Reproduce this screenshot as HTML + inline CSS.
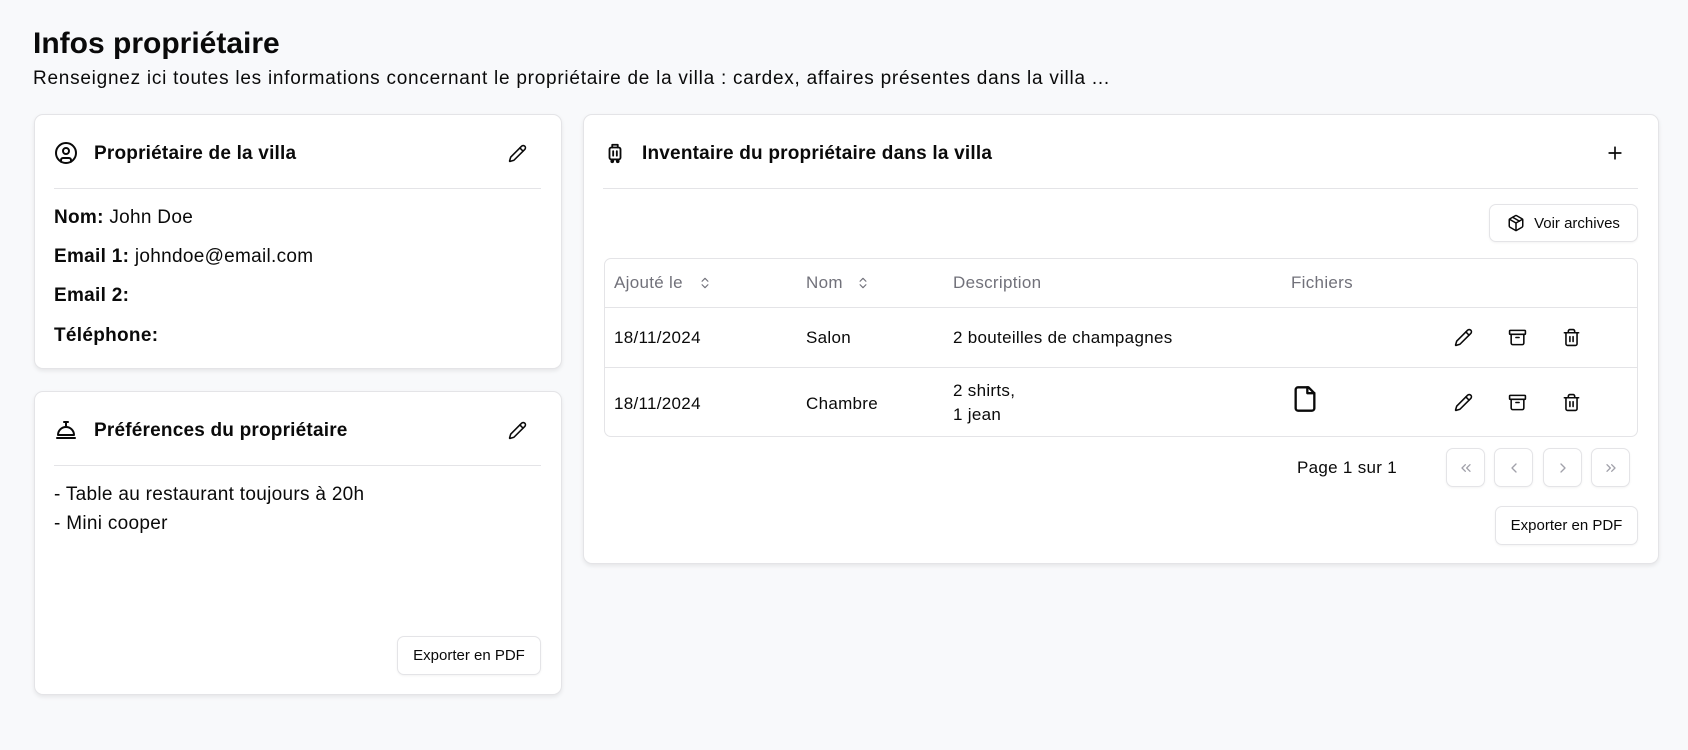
<!DOCTYPE html>
<html><head><meta charset="utf-8"><style>
*{box-sizing:border-box;margin:0;padding:0}
body{width:1688px;height:750px;background:#f8f9fb;font-family:"Liberation Sans",sans-serif;color:#0a0a0a;position:relative;overflow:hidden}
.a{position:absolute}
.card{position:absolute;background:#fff;border:1px solid #e4e4e7;border-radius:9px;box-shadow:0 2px 4px rgba(0,0,0,.08)}
.h{font-size:19px;font-weight:bold;white-space:nowrap;letter-spacing:0.2px}
.div{position:absolute;height:1px;background:#e4e4e7}
.btn{position:absolute;background:#fff;border:1px solid #e4e4e7;border-radius:7px;box-shadow:0 1px 2px rgba(0,0,0,.05);font-size:15px;display:flex;align-items:center;justify-content:center;gap:9px}
.t{font-size:17px;white-space:nowrap;letter-spacing:0.3px}
.th{font-size:17px;color:#71717a;white-space:nowrap;letter-spacing:0.3px}
svg{fill:none;stroke:#0a0a0a;stroke-width:2;stroke-linecap:round;stroke-linejoin:round}
.pg svg{stroke:#a1a1aa}
</style></head><body>
<div class="a" style="left:33px;top:27px;font-size:30px;font-weight:bold">Infos propriétaire</div>
<div class="a" style="left:33px;top:68px;font-size:19px;letter-spacing:0.75px;white-space:nowrap">Renseignez ici toutes les informations concernant le propriétaire de la villa : cardex, affaires présentes dans la villa ...</div>

<div class="card" style="left:34px;top:114px;width:528px;height:255px"></div>
<svg class="a" style="left:54px;top:141px" width="24" height="24" viewBox="0 0 24 24"><circle cx="12" cy="12" r="10"/><circle cx="12" cy="10" r="3"/><path d="M7 20.7v-1.7a2 2 0 0 1 2-2h6a2 2 0 0 1 2 2v1.7"/></svg>
<div class="a h" style="left:94px;top:143px">Propriétaire de la villa</div>
<svg class="a" style="left:508px;top:144px" width="19" height="19" viewBox="0 0 24 24"><path d="M21.2 6.8a2.8 2.8 0 0 0-4-4L3.8 16.2a2 2 0 0 0-.5.8l-1.3 4.4a.5.5 0 0 0 .6.6l4.4-1.3a2 2 0 0 0 .8-.5z"/><path d="m15 5 4 4"/></svg>
<div class="div" style="left:54px;top:188px;width:487px"></div>
<div class="a t" style="left:54px;top:207px;font-size:19px"><b>Nom:</b> John Doe</div>
<div class="a t" style="left:54px;top:246px;font-size:19px"><b>Email 1:</b> johndoe@email.com</div>
<div class="a t" style="left:54px;top:285px;font-size:19px"><b>Email 2:</b></div>
<div class="a t" style="left:54px;top:325px;font-size:19px"><b>Téléphone:</b></div>

<div class="card" style="left:34px;top:391px;width:528px;height:304px"></div>
<svg class="a" style="left:54px;top:418px" width="24" height="24" viewBox="0 0 24 24"><path d="M3 20h18"/><path d="M20 17a8 8 0 0 0-16 0z"/><path d="M12 4v5"/><path d="M10 4h4"/></svg>
<div class="a h" style="left:94px;top:420px">Préférences du propriétaire</div>
<svg class="a" style="left:508px;top:421px" width="19" height="19" viewBox="0 0 24 24"><path d="M21.2 6.8a2.8 2.8 0 0 0-4-4L3.8 16.2a2 2 0 0 0-.5.8l-1.3 4.4a.5.5 0 0 0 .6.6l4.4-1.3a2 2 0 0 0 .8-.5z"/><path d="m15 5 4 4"/></svg>
<div class="div" style="left:54px;top:465px;width:487px"></div>
<div class="a t" style="left:54px;top:484px;font-size:19px">- Table au restaurant toujours à 20h</div>
<div class="a t" style="left:54px;top:513px;font-size:19px">- Mini cooper</div>
<div class="btn" style="left:397px;top:636px;width:144px;height:39px">Exporter en PDF</div>

<div class="card" style="left:583px;top:114px;width:1076px;height:450px"></div>
<svg class="a" style="left:604px;top:142px" width="22" height="22" viewBox="0 0 24 24"><rect x="6" y="6" width="12" height="13" rx="2"/><path d="M9 6V3h6v3"/><path d="M10 10v5M14 10v5"/><circle cx="9" cy="21" r="1"/><circle cx="15" cy="21" r="1"/></svg>
<div class="a h" style="left:642px;top:143px">Inventaire du propriétaire dans la villa</div>
<svg class="a" style="left:1605px;top:143px" width="20" height="20" viewBox="0 0 24 24"><path d="M5 12h14M12 5v14"/></svg>
<div class="div" style="left:603px;top:188px;width:1035px"></div>
<div class="btn" style="left:1489px;top:204px;width:149px;height:38px"><svg width="18" height="18" viewBox="0 0 24 24"><path d="M11 21.7a2 2 0 0 0 2 0l7-4A2 2 0 0 0 21 16V8a2 2 0 0 0-1-1.7l-7-4a2 2 0 0 0-2 0l-7 4A2 2 0 0 0 3 8v8a2 2 0 0 0 1 1.7z"/><path d="M12 22V12"/><path d="M3.3 7 12 12l8.7-5"/><path d="m7.5 4.3 9 5.2"/></svg>Voir archives</div>
<div class="a" style="left:604px;top:258px;width:1034px;height:179px;border:1px solid #e4e4e7;border-radius:7px"></div>
<div class="div" style="left:604px;top:307px;width:1034px"></div>
<div class="div" style="left:604px;top:367px;width:1034px"></div>
<div class="a th" style="left:614px;top:273px">Ajouté le</div>
<svg class="a" style="left:698px;top:275px" width="14" height="16" viewBox="0 0 24 24"><path d="m7 15 5 5 5-5M7 9l5-5 5 5" stroke="#71717a"/></svg>
<div class="a th" style="left:806px;top:273px">Nom</div>
<svg class="a" style="left:856px;top:275px" width="14" height="16" viewBox="0 0 24 24"><path d="m7 15 5 5 5-5M7 9l5-5 5 5" stroke="#71717a"/></svg>
<div class="a th" style="left:953px;top:273px">Description</div>
<div class="a th" style="left:1291px;top:273px">Fichiers</div>
<div class="a t" style="left:614px;top:328px">18/11/2024</div>
<div class="a t" style="left:806px;top:328px">Salon</div>
<div class="a t" style="left:953px;top:328px">2 bouteilles de champagnes</div>
<div class="a t" style="left:614px;top:394px">18/11/2024</div>
<div class="a t" style="left:806px;top:394px">Chambre</div>
<div class="a t" style="left:953px;top:381px">2 shirts,</div>
<div class="a t" style="left:953px;top:405px">1 jean</div>
<svg class="a" style="left:1291px;top:385px" width="28" height="28" viewBox="0 0 24 24"><path d="M15 2H6a2 2 0 0 0-2 2v16a2 2 0 0 0 2 2h12a2 2 0 0 0 2-2V7z"/><path d="M14 2v5h6"/></svg>
<svg class="a" style="left:1454px;top:328px" width="19" height="19" viewBox="0 0 24 24"><path d="M21.2 6.8a2.8 2.8 0 0 0-4-4L3.8 16.2a2 2 0 0 0-.5.8l-1.3 4.4a.5.5 0 0 0 .6.6l4.4-1.3a2 2 0 0 0 .8-.5z"/><path d="m15 5 4 4"/></svg>
<svg class="a" style="left:1508px;top:328px" width="19" height="19" viewBox="0 0 24 24"><rect x="2" y="3" width="20" height="5" rx="1"/><path d="M4 8v11a2 2 0 0 0 2 2h12a2 2 0 0 0 2-2V8"/><path d="M10 12h4"/></svg>
<svg class="a" style="left:1562px;top:328px" width="19" height="19" viewBox="0 0 24 24"><path d="M3 6h18"/><path d="M19 6v14a2 2 0 0 1-2 2H7a2 2 0 0 1-2-2V6"/><path d="M8 6V4a2 2 0 0 1 2-2h4a2 2 0 0 1 2 2v2"/><path d="M10 11v6M14 11v6"/></svg>
<svg class="a" style="left:1454px;top:393px" width="19" height="19" viewBox="0 0 24 24"><path d="M21.2 6.8a2.8 2.8 0 0 0-4-4L3.8 16.2a2 2 0 0 0-.5.8l-1.3 4.4a.5.5 0 0 0 .6.6l4.4-1.3a2 2 0 0 0 .8-.5z"/><path d="m15 5 4 4"/></svg>
<svg class="a" style="left:1508px;top:393px" width="19" height="19" viewBox="0 0 24 24"><rect x="2" y="3" width="20" height="5" rx="1"/><path d="M4 8v11a2 2 0 0 0 2 2h12a2 2 0 0 0 2-2V8"/><path d="M10 12h4"/></svg>
<svg class="a" style="left:1562px;top:393px" width="19" height="19" viewBox="0 0 24 24"><path d="M3 6h18"/><path d="M19 6v14a2 2 0 0 1-2 2H7a2 2 0 0 1-2-2V6"/><path d="M8 6V4a2 2 0 0 1 2-2h4a2 2 0 0 1 2 2v2"/><path d="M10 11v6M14 11v6"/></svg>
<div class="a t" style="left:1297px;top:458px">Page 1 sur 1</div>
<div class="btn pg" style="left:1446px;top:448px;width:39px;height:39px"><svg width="16" height="16" viewBox="0 0 24 24"><path d="m11 17-5-5 5-5M18 17l-5-5 5-5"/></svg></div>
<div class="btn pg" style="left:1494px;top:448px;width:39px;height:39px"><svg width="16" height="16" viewBox="0 0 24 24"><path d="m15 18-6-6 6-6"/></svg></div>
<div class="btn pg" style="left:1543px;top:448px;width:39px;height:39px"><svg width="16" height="16" viewBox="0 0 24 24"><path d="m9 18 6-6-6-6"/></svg></div>
<div class="btn pg" style="left:1591px;top:448px;width:39px;height:39px"><svg width="16" height="16" viewBox="0 0 24 24"><path d="m6 17 5-5-5-5M13 17l5-5-5-5"/></svg></div>
<div class="btn" style="left:1495px;top:506px;width:143px;height:39px">Exporter en PDF</div>
</body></html>
